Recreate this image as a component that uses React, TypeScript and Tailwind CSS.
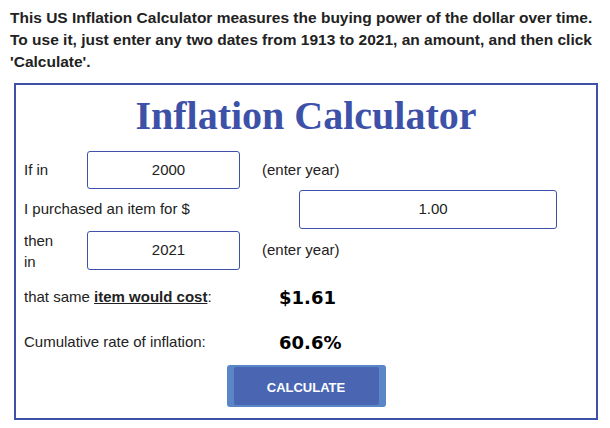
export default function App() {
  const body = "font-['Liberation_Sans',Arial,sans-serif]";

  return (
    <div className={`w-[610px] h-[428px] bg-white text-[#222] ${body}`}>
      {/* Intro */}
      <p className="pt-[7px] pl-[10px] pr-[4px] text-[15.5px] leading-[22px] font-bold">
        This US Inflation Calculator measures the buying power of the dollar over time.
        <br />
        To use it, just enter any two dates from 1913 to 2021, an amount, and then click 'Calculate'.
      </p>

      {/* Calculator box */}
      <div className="ml-[14px] mt-[10px] w-[584px] h-[337px] border-2 border-[#3d51a9] pl-[8px] pt-[9px]">
        <h1 className="text-center text-[40px] leading-[44px] font-bold text-[#3d51a9] font-['Liberation_Serif','Times_New_Roman',serif] pr-[8px]">
          Inflation Calculator
        </h1>

        <div className="mt-[13px] flex items-center h-[38px] text-[15px]">
          <div className="w-[63px]">If in</div>
          <div className="w-[153px] h-[38px] pl-[10px] border border-[#3d51a9] rounded-[3px] flex items-center justify-center">
            2000
          </div>
          <div className="ml-[22px]">(enter year)</div>
        </div>

        <div className="mt-[1px] flex items-center h-[39px] text-[15px]">
          <div className="w-[275px]">I purchased an item for $</div>
          <div className="w-[258px] h-[39px] pl-[10px] border border-[#3d51a9] rounded-[3px] flex items-center justify-center">
            1.00
          </div>
        </div>

        <div className="mt-[2px] flex items-center h-[39px] text-[15px]">
          <div className="w-[63px] leading-[21px] pr-[20px]">then in</div>
          <div className="w-[153px] h-[39px] pl-[10px] border border-[#3d51a9] rounded-[3px] flex items-center justify-center">
            2021
          </div>
          <div className="ml-[22px]">(enter year)</div>
        </div>

        <div className="mt-[10px] flex items-center h-[34px] text-[15px]">
          <div className="w-[255px]">
            that same <span className="font-bold underline">item would cost</span>:
          </div>
          <div className="text-[18px] font-bold text-black font-['DejaVu_Sans',Verdana,sans-serif]">$1.61</div>
        </div>

        <div className="mt-[11px] flex items-center h-[34px] text-[15px]">
          <div className="w-[255px]">Cumulative rate of inflation:</div>
          <div className="text-[18px] font-bold text-black font-['DejaVu_Sans',Verdana,sans-serif]">60.6%</div>
        </div>

        <div className="mt-[6px] flex justify-center pr-[8px]">
          <button className="w-[159px] h-[42px] rounded-[3px] bg-[#5a86c8] px-[7px] py-[2px]">
            <span className="flex w-full h-full items-center justify-center pt-[3px] rounded-[2px] bg-[#4a66b3] text-white text-[13px] font-bold">
              CALCULATE
            </span>
          </button>
        </div>
      </div>
    </div>
  );
}
